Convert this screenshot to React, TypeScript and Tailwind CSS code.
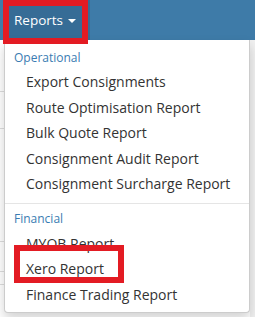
const operational = [
  'Export Consignments',
  'Route Optimisation Report',
  'Bulk Quote Report',
  'Consignment Audit Report',
  'Consignment Surcharge Report',
];

const financial = ['MYOB Report', 'Xero Report', 'Finance Trading Report'];

function MenuHeader({ label, className }: { label: string; className: string }) {
  return (
    <div
      className={`flex items-center whitespace-nowrap px-[9px] text-[12px] text-[#3a7cb2] ${className}`}
    >
      {label}
    </div>
  );
}

function MenuItem({ label }: { label: string }) {
  return (
    <div className="flex h-[25.5px] items-center whitespace-nowrap px-[21px] text-[14px] text-[#333333]">
      {label}
    </div>
  );
}

export default function App() {
  return (
    <div
      className="relative h-[317px] w-[255px] overflow-hidden bg-white"
      style={{ fontFamily: '"Open Sans", "Liberation Sans", sans-serif' }}
    >
      {/* top nav */}
      <nav className="flex h-[40px] bg-[#3e7ba8] pl-[3px]">
        <button className="flex h-full items-center gap-[5px] bg-[#366c96] pl-[11px] pr-[14px] text-[13.5px] text-white">
          Reports
          <span className="mt-[1px] h-0 w-0 border-x-[4px] border-t-[4px] border-x-transparent border-t-white" />
        </button>
      </nav>

      {/* page content peeking behind the menu */}
      <div className="flex flex-col">
        <div className="h-[52px] border-b border-[#dddddd]" />
        <div className="h-[37px] border-b border-[#dddddd]" />
        <div className="h-[113px] border-b border-[#dddddd]" />
        <div className="h-[30px] border-b border-[#dddddd]" />
        <div className="h-[13px] border-b border-[#dddddd]" />
      </div>
      <div className="absolute right-0 top-[40px] h-[277px] w-[5px] bg-[#f0f0f0]" />

      {/* dropdown */}
      <div className="absolute left-[4px] top-[40px] w-[246px] rounded-b-[4px] border border-t-0 border-[#cccccc] bg-white pb-[5px] pt-[7px] shadow-[0_6px_12px_rgba(0,0,0,0.175)]">
        <MenuHeader label="Operational" className="h-[22px]" />
        {operational.map((item) => (
          <MenuItem key={item} label={item} />
        ))}
        <div className="mb-[4px] mt-[6px] h-px bg-[#e5e5e5]" />
        <MenuHeader label="Financial" className="h-[23px]" />
        {financial.map((item) => (
          <MenuItem key={item} label={item} />
        ))}
      </div>

      {/* annotation boxes */}
      <div className="absolute left-[3px] top-0 h-[44px] w-[85px] border-[6px] border-[#e31b23]" />
      <div className="absolute left-[14px] top-[245px] h-[38px] w-[110px] border-[6px] border-[#e31b23]" />
    </div>
  );
}
